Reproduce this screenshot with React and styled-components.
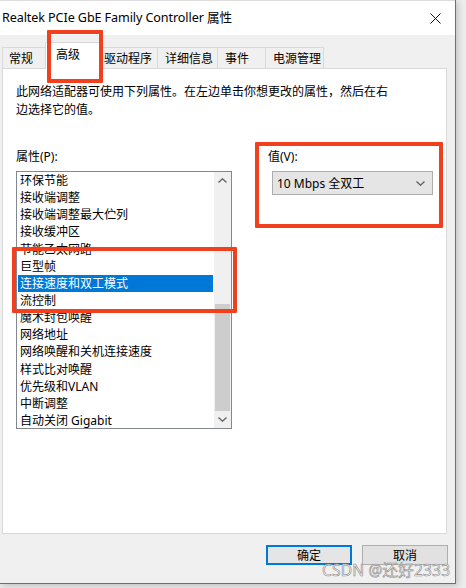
import React from "react";
import styled, { createGlobalStyle } from "styled-components";

const Global = createGlobalStyle`
  html, body { margin: 0; padding: 0; background: #ececec; }
  body { font-family: "Noto Sans", "Noto Sans CJK SC", sans-serif; color: #000; }
  * { box-sizing: border-box; }
`;

const Stage = styled.div`
  position: relative;
  width: 466px;
  height: 588px;
  overflow: hidden;
  background: #ececec;
`;

const Window = styled.div`
  width: 456px;
  height: 584px;
  background: #f0f0f0;
  border-right: 1px solid #6f6f6f;
  border-bottom: 1px solid #6f6f6f;
  box-shadow: 2px 2px 6px rgba(0, 0, 0, 0.18);
  display: flex;
  flex-direction: column;
`;

const TitleBar = styled.div`
  height: 35px;
  flex: none;
  background: #fff;
  border-top: 1px solid #dcdcdc;
  display: flex;
  align-items: center;
  justify-content: space-between;
  padding: 0 10px 0 2px;
`;

const Title = styled.div`
  font-size: 12.6px;
  line-height: 18px;
  color: #000;
  letter-spacing: -0.1px;
`;

const Close = styled.svg`
  width: 11px;
  height: 11px;
  margin-right: 4px;
`;

const TabStrip = styled.div`
  display: flex;
  align-items: flex-end;
  height: 27px;
  margin-top: 7px;
  margin-bottom: -1px;
  padding-left: 2px;
  position: relative;
  z-index: 1;
`;

const Tab = styled.div`
  height: ${(p) => (p.$active ? 27 : 22)}px;
  width: ${(p) => p.$w}px;
  padding-left: ${(p) => p.$pad}px;
  padding-top: ${(p) => (p.$active ? 4 : 3)}px;
  margin-left: ${(p) => (p.$first ? 0 : -1)}px;
  background: ${(p) => (p.$active ? "#fff" : "#f0f0f0")};
  border: 1px solid #d9d9d9;
  border-bottom: ${(p) => (p.$active ? "none" : "1px solid #d9d9d9")};
  font-size: 12px;
  line-height: 16px;
  white-space: nowrap;
  position: relative;
  z-index: ${(p) => (p.$active ? 2 : 1)};
`;

const Panel = styled.div`
  margin-left: 2px;
  width: 445px;
  height: 466px;
  flex: none;
  background: #fff;
  border: 1px solid #d9d9d9;
  padding: 14px 13px 0 13px;
  display: flex;
  flex-direction: column;
`;

const Description = styled.div`
  width: 376px;
  font-size: 12px;
  line-height: 18px;
`;

const Columns = styled.div`
  display: grid;
  grid-template-columns: 216px 165px;
  column-gap: 36px;
  margin-top: 29px;
`;

const Column = styled.div`
  display: flex;
  flex-direction: column;
`;

const FieldLabel = styled.div`
  font-size: 12px;
  line-height: 18px;
  margin-bottom: 5px;
`;

const ListBox = styled.div`
  width: 216px;
  height: 258px;
  border: 1px solid #828790;
  display: flex;
`;

const Items = styled.div`
  flex: 1;
  padding: 0 1px;
`;

const Item = styled.div`
  height: 17.15px;
  line-height: 17px;
  font-size: 12px;
  padding-left: 2px;
  white-space: nowrap;
  background: ${(p) => (p.$selected ? "#0078d7" : "transparent")};
  color: ${(p) => (p.$selected ? "#fff" : "#000")};
`;

const ScrollBar = styled.div`
  width: 17px;
  background: #f0f0f0;
  display: flex;
  flex-direction: column;
`;

const ScrollButton = styled.div`
  height: 17px;
  flex: none;
  display: flex;
  align-items: center;
  justify-content: center;
`;

const Track = styled.div`
  flex: 1;
  display: flex;
  flex-direction: column;
  justify-content: flex-end;
  padding: 0 1px;
`;

const Thumb = styled.div`
  height: 107px;
  background: #cdcdcd;
`;

const Select = styled.div`
  margin-left: 4px;
  width: 161px;
  height: 24px;
  background: #e5e5e5;
  border: 1px solid #adadad;
  display: flex;
  align-items: center;
  justify-content: space-between;
  padding: 0 7px 0 4px;
  font-size: 12px;
`;

const Footer = styled.div`
  display: flex;
  padding: 11px 0 0 266px;
  gap: 10px;
`;

const Button = styled.div`
  width: ${(p) => p.$w}px;
  height: 20px;
  display: flex;
  align-items: center;
  justify-content: center;
  font-size: 12px;
  background: ${(p) => (p.$default ? "#e5e5e5" : "#e1e1e1")};
  border: ${(p) => (p.$default ? "2px solid #0078d7" : "1px solid #adadad")};
`;

const Mark = styled.div`
  position: absolute;
  border: 4px solid #f2401f;
  border-radius: 1px;
  pointer-events: none;
  z-index: 5;
`;

const Watermark = styled.div`
  position: absolute;
  left: 322px;
  top: 560px;
  font-size: 15.5px;
  line-height: 20px;
  letter-spacing: 0.2px;
  color: rgba(255, 255, 255, 0.85);
  -webkit-text-stroke: 0.6px #8a8a8a;
  font-family: "Noto Sans", "Noto Sans CJK SC", sans-serif;
  z-index: 6;
  white-space: nowrap;
`;

const Chevron = ({ up, w = 9, h = 5 }) => (
  <svg width={w} height={h} viewBox="0 0 9 5">
    <path
      d={up ? "M0.5 4.5 L4.5 0.8 L8.5 4.5" : "M0.5 0.5 L4.5 4.2 L8.5 0.5"}
      fill="none"
      stroke="#606060"
      strokeWidth="1.3"
    />
  </svg>
);

const tabs = [
  { label: "常规", w: 44, pad: 6 },
  { label: "高级", w: 56, pad: 10, active: true },
  { label: "驱动程序", w: 58, pad: 3 },
  { label: "详细信息", w: 61, pad: 7 },
  { label: "事件", w: 49, pad: 7 },
  { label: "电源管理", w: 59, pad: 7 },
];

const items = [
  "环保节能",
  "接收端调整",
  "接收端调整最大伫列",
  "接收缓冲区",
  "节能乙太网路",
  "巨型帧",
  "连接速度和双工模式",
  "流控制",
  "魔术封包唤醒",
  "网络地址",
  "网络唤醒和关机连接速度",
  "样式比对唤醒",
  "优先级和VLAN",
  "中断调整",
  "自动关闭 Gigabit",
];

export default function App() {
  return (
    <Stage>
      <Global />
      <Window>
        <TitleBar>
          <Title>Realtek PCIe GbE Family Controller 属性</Title>
          <Close viewBox="0 0 11 11">
            <path d="M0.5 0.5 L10.5 10.5 M10.5 0.5 L0.5 10.5" stroke="#111" strokeWidth="1" />
          </Close>
        </TitleBar>
        <TabStrip>
          {tabs.map((t, i) => (
            <Tab key={t.label} $w={t.w} $pad={t.pad} $active={t.active} $first={i === 0}>
              {t.label}
            </Tab>
          ))}
        </TabStrip>
        <Panel>
          <Description>
            此网络适配器可使用下列属性。在左边单击你想更改的属性，然后在右边选择它的值。
          </Description>
          <Columns>
            <Column>
              <FieldLabel>属性(P):</FieldLabel>
              <ListBox>
                <Items>
                  {items.map((it) => (
                    <Item key={it} $selected={it === "连接速度和双工模式"}>
                      {it}
                    </Item>
                  ))}
                </Items>
                <ScrollBar>
                  <ScrollButton>
                    <Chevron up />
                  </ScrollButton>
                  <Track>
                    <Thumb />
                  </Track>
                  <ScrollButton>
                    <Chevron />
                  </ScrollButton>
                </ScrollBar>
              </ListBox>
            </Column>
            <Column>
              <FieldLabel>值(V):</FieldLabel>
              <Select>
                <span>10 Mbps 全双工</span>
                <Chevron />
              </Select>
            </Column>
          </Columns>
        </Panel>
        <Footer>
          <Button $w={86} $default>确定</Button>
          <Button $w={86}>取消</Button>
        </Footer>
      </Window>
      <Mark style={{ left: 47, top: 30, width: 56, height: 53 }} />
      <Mark style={{ left: 12, top: 247, width: 225, height: 66 }} />
      <Mark style={{ left: 255, top: 142, width: 188, height: 86 }} />
      <Watermark>CSDN @还好2333</Watermark>
    </Stage>
  );
}
